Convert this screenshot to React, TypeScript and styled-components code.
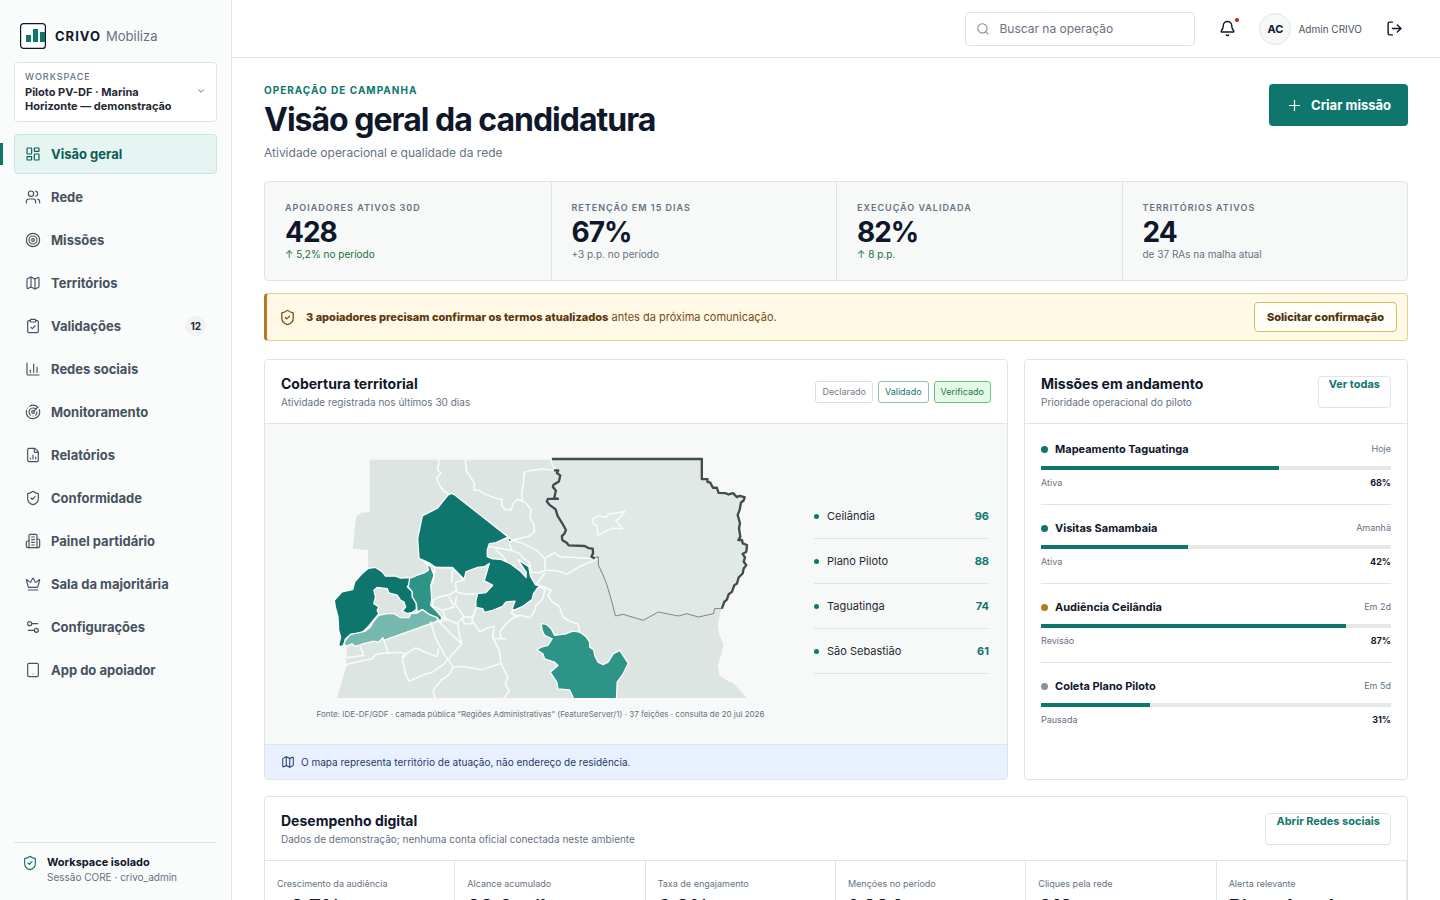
import React from 'react';
import styled, { createGlobalStyle } from 'styled-components';
import {
  Bell, ChartColumn, ChevronDown, ClipboardCheck, Crown, FileChartColumn, LayoutDashboard,
  LogOut, Map as MapIcon, Plus, Radar, Search, Settings2, ShieldCheck, Tablet, Target, Users,
} from 'lucide-react';

const c = {
  ink: '#0f172a',
  text: '#1f2933',
  slate: '#475260',
  muted: '#66727f',
  line: '#e1e4e6',
  soft: '#f7f8f8',
  teal: '#0f766e',
  amber: '#b7791f',
};

const GlobalStyle = createGlobalStyle`
  *, *::before, *::after { box-sizing: border-box; }
  body {
    margin: 0;
    background: #fff;
    color: ${c.ink};
    font-family: Inter, "Liberation Sans", sans-serif;
    font-size: 13px;
    line-height: 16px;
  }
  h1, h2, p, ul, dl, dd { margin: 0; padding: 0; }
  ul { list-style: none; }
  a { color: inherit; text-decoration: none; }
  button, input { font: inherit; color: inherit; }
  button { cursor: pointer; }
  svg { display: block; flex: none; }
`;

const Shell = styled.div`
  display: grid;
  grid-template-columns: 232px minmax(0, 1fr);
  align-items: start;
`;

const Sidebar = styled.aside`
  position: sticky;
  top: 0;
  height: 100vh;
  display: flex;
  flex-direction: column;
  padding: 23px 14px 16px;
  background: #fafbfb;
  border-right: 1px solid ${c.line};
`;

const Brand = styled.a`
  display: flex;
  align-items: center;
  gap: 9px;
  height: 25px;
  padding-left: 6px;
  margin-bottom: 14px;
  font-size: 13px;
  color: ${c.muted};
  strong {
    margin-right: 5px;
    color: ${c.ink};
    letter-spacing: 1px;
  }
`;

const Workspace = styled.button`
  display: flex;
  align-items: center;
  justify-content: space-between;
  gap: 8px;
  min-height: 60px;
  margin-bottom: 12px;
  padding: 6px 10px 8px;
  border: 1px solid ${c.line};
  border-radius: 4px;
  background: #fff;
  text-align: left;
  font-size: 11px;
  line-height: 14px;
  font-weight: 700;
  color: ${c.text};
  small {
    display: block;
    margin-bottom: 1px;
    font-size: 9px;
    font-weight: 500;
    letter-spacing: 1px;
    color: ${c.muted};
  }
`;

const Nav = styled.nav`
  ul { display: grid; gap: 3px; }
`;

const NavLink = styled.a<{ $active?: boolean }>`
  position: relative;
  display: flex;
  align-items: center;
  gap: 10px;
  height: 40px;
  padding: 0 10px;
  border: 1px solid ${p => (p.$active ? '#cde5e0' : 'transparent')};
  border-radius: 4px;
  background: ${p => (p.$active ? '#e6f5f1' : 'transparent')};
  color: ${p => (p.$active ? '#0b5e57' : c.slate)};
  font-weight: 700;
  &::before {
    content: '';
    display: ${p => (p.$active ? 'block' : 'none')};
    position: absolute;
    left: -15px;
    top: 8px;
    width: 3px;
    height: 22px;
    background: ${c.teal};
  }
`;

const Count = styled.span`
  margin-left: auto;
  padding: 0 5px;
  line-height: 20px;
  border-radius: 10px;
  background: #f0f2f3;
  color: ${c.text};
  font-size: 10px;
`;

const SideFoot = styled.div`
  display: flex;
  gap: 9px;
  margin-top: auto;
  padding: 12px 8px 0;
  border-top: 1px solid ${c.line};
  font-size: 10px;
  line-height: 14px;
  color: ${c.muted};
  svg { color: ${c.teal}; }
  strong { display: block; font-size: 11px; font-weight: 700; line-height: 15px; color: ${c.ink}; }
`;

const Topbar = styled.header`
  display: flex;
  align-items: center;
  justify-content: flex-end;
  gap: 14px;
  height: 58px;
  padding: 0 28px;
  border-bottom: 1px solid ${c.line};
`;

const SearchBox = styled.label`
  display: flex;
  align-items: center;
  gap: 9px;
  width: 230px;
  height: 34px;
  padding: 0 10px;
  border: 1px solid ${c.line};
  border-radius: 4px;
  color: #7b8691;
  input {
    width: 100%;
    padding: 0;
    border: 0;
    outline: 0;
    background: none;
    font-size: 12px;
  }
  input::placeholder { color: #6b7280; opacity: 1; }
`;

const IconButton = styled.button`
  position: relative;
  display: grid;
  place-items: center;
  width: 36px;
  height: 36px;
  padding: 0;
  border: 0;
  background: none;
`;

const Alarm = styled.span`
  position: absolute;
  top: 7px;
  right: 6px;
  width: 4px;
  height: 4px;
  border-radius: 50%;
  background: #b42318;
`;

const Profile = styled.div`
  display: flex;
  align-items: center;
  gap: 7px;
  font-size: 10px;
  color: ${c.slate};
`;

const Avatar = styled.span`
  display: grid;
  place-items: center;
  width: 32px;
  height: 32px;
  border: 1px solid ${c.line};
  border-radius: 50%;
  background: ${c.soft};
  color: ${c.ink};
  font-size: 11px;
  font-weight: 700;
`;

const Main = styled.main`
  padding: 26px 32px;
`;

const PageHead = styled.div`
  display: flex;
  justify-content: space-between;
  align-items: flex-start;
  margin-bottom: 20px;
`;

const Eyebrow = styled.p`
  font-size: 10px;
  line-height: 12px;
  font-weight: 700;
  letter-spacing: 1px;
  color: ${c.teal};
`;

const Title = styled.h1`
  font-size: 32px;
  line-height: 48px;
  font-weight: 700;
  letter-spacing: -1px;
`;

const Lead = styled.p`
  margin-top: 1px;
  font-size: 12px;
  color: ${c.muted};
`;

const PrimaryButton = styled.button`
  display: flex;
  align-items: center;
  gap: 8px;
  height: 42px;
  padding: 0 17px;
  border: 0;
  border-radius: 4px;
  background: ${c.teal};
  color: #fff;
  font-weight: 700;
`;

const Stats = styled.dl`
  display: grid;
  grid-template-columns: repeat(4, minmax(0, 1fr));
  border: 1px solid ${c.line};
  border-radius: 4px;
  background: ${c.soft};
`;

const Stat = styled.div`
  padding: 18px 20px 20px;
  & + & { border-left: 1px solid ${c.line}; }
  dt {
    font-size: 9px;
    line-height: 16px;
    font-weight: 600;
    letter-spacing: 1px;
    color: ${c.muted};
  }
`;

const StatValue = styled.dd`
  font-size: 28px;
  line-height: 32px;
  font-weight: 700;
  letter-spacing: -1px;
`;

const StatNote = styled.dd<{ $up?: boolean }>`
  font-size: 10px;
  line-height: 12px;
  color: ${p => (p.$up ? '#15703a' : c.muted)};
`;

const Notice = styled.section`
  display: flex;
  align-items: center;
  gap: 10px;
  min-height: 48px;
  margin: 12px 0 18px;
  padding: 0 10px 0 12px;
  border: 1px solid #e6cf94;
  border-left: 3px solid ${c.amber};
  border-radius: 4px;
  background: #fff9e6;
  color: #7a4a12;
  font-size: 11px;
  strong { font-weight: 800; color: #5c360c; }
  p { flex: 1; }
`;

const NoticeButton = styled.button`
  height: 30px;
  padding: 0 12px;
  border: 1px solid #d9b96c;
  border-radius: 4px;
  background: #fffdf5;
  color: #4f300b;
  font-size: 11px;
  font-weight: 800;
`;

const Columns = styled.div`
  display: grid;
  grid-template-columns: minmax(0, 31fr) minmax(0, 16fr);
  gap: 16px;
  margin-bottom: 16px;
`;

const Card = styled.section`
  display: flex;
  flex-direction: column;
  border: 1px solid ${c.line};
  border-radius: 4px;
  background: #fff;
  overflow: hidden;
`;

const CardHead = styled.header`
  display: flex;
  align-items: center;
  justify-content: space-between;
  height: 64px;
  padding: 0 16px;
  border-bottom: 1px solid ${c.line};
  h2 { font-size: 14px; line-height: 20px; font-weight: 700; }
  p { font-size: 10px; color: ${c.muted}; }
`;

const HeadLink = styled.a`
  height: 32px;
  padding: 0 10px;
  border: 1px solid ${c.line};
  border-radius: 4px;
  font-size: 11px;
  line-height: 15px;
  font-weight: 700;
  color: ${c.teal};
`;

const Tags = styled.div`
  display: flex;
  gap: 5px;
`;

const Tag = styled.button<{ $tone: 'plain' | 'teal' | 'green' }>`
  height: 22px;
  padding: 0 6px;
  border: 1px solid ${p => ({ plain: '#dcdfe2', teal: '#8bbfb9', green: '#6fc389' })[p.$tone]};
  border-radius: 3px;
  background: ${p => (p.$tone === 'green' ? '#e3fbe6' : '#fff')};
  color: ${p => ({ plain: '#737d87', teal: c.teal, green: '#1b7a3d' })[p.$tone]};
  font-size: 9px;
  line-height: 12px;
`;

const MapBody = styled.div`
  flex: 1;
  display: grid;
  grid-template-columns: minmax(0, 1fr) 175px;
  gap: 16px;
  align-items: center;
  min-height: 320px;
  padding: 0 18px;
  background: ${c.soft};
`;

const Figure = styled.figure`
  margin: 10px 0 0;
  text-align: center;
  svg { width: 100%; height: 243px; }
  figcaption {
    margin-top: 6px;
    font-size: 8px;
    color: ${c.muted};
  }
`;

const Ranking = styled.ul`
  width: 100%;
`;

const RankRow = styled.li`
  display: flex;
  align-items: center;
  gap: 8px;
  height: 45px;
  border-bottom: 1px solid ${c.line};
  font-size: 11px;
  color: ${c.text};
  &::before {
    content: '';
    width: 5px;
    height: 5px;
    border-radius: 50%;
    background: ${c.teal};
  }
  strong { margin-left: auto; color: ${c.teal}; }
`;

const MapNote = styled.p`
  display: flex;
  align-items: center;
  gap: 6px;
  height: 35px;
  padding: 0 16px;
  border-top: 1px solid #dbe5f5;
  background: #eaf1fe;
  color: #1e3a6e;
  font-size: 10px;
`;

const MissionList = styled.ul`
  padding: 0 16px;
`;

const Mission = styled.li`
  display: grid;
  gap: 9px;
  height: 79px;
  padding-top: 15px;
  align-content: start;
  & + & { border-top: 1px solid ${c.line}; }
  &:first-child { height: 80px; padding-top: 17px; }
`;

const MissionRow = styled.div`
  display: flex;
  align-items: center;
  justify-content: space-between;
  line-height: 16px;
  font-size: 9px;
  color: ${c.muted};
  b { color: ${c.ink}; font-size: 9px; }
`;

const MissionName = styled.span<{ $dot: string }>`
  display: flex;
  align-items: center;
  gap: 7px;
  font-size: 11px;
  font-weight: 700;
  color: ${c.ink};
  &::before {
    content: '';
    width: 7px;
    height: 7px;
    border-radius: 50%;
    background: ${p => p.$dot};
  }
`;

const Track = styled.div`
  height: 4px;
  margin-bottom: -5px;
  background: #e6e8e8;
`;

const Fill = styled.div`
  height: 100%;
  background: ${c.teal};
`;

const Metrics = styled.dl`
  display: grid;
  grid-template-columns: repeat(6, minmax(0, 1fr));
`;

const Metric = styled.div`
  padding: 15px 12px;
  border-right: 1px solid ${c.line};
  dt { font-size: 9px; color: ${c.muted}; }
  dd { margin-top: 3px; font-size: 20px; line-height: 24px; font-weight: 700; }
`;

const Building = ({ size = 16, strokeWidth = 2 }: { size?: number; strokeWidth?: number }) => (
  <svg width={size} height={size} viewBox="0 0 24 24" fill="none" stroke="currentColor" strokeWidth={strokeWidth} strokeLinecap="round" strokeLinejoin="round" aria-hidden="true">
    <path d="M6 22V4a2 2 0 0 1 2-2h8a2 2 0 0 1 2 2v18Z" />
    <path d="M6 12H4a2 2 0 0 0-2 2v6a2 2 0 0 0 2 2h2" />
    <path d="M18 9h2a2 2 0 0 1 2 2v9a2 2 0 0 1-2 2h-2" />
    <path d="M10 6h4M10 10h4M10 14h4M10 18h4" />
  </svg>
);

const nav = [
  { label: 'Visão geral', icon: LayoutDashboard },
  { label: 'Rede', icon: Users },
  { label: 'Missões', icon: Target },
  { label: 'Territórios', icon: MapIcon },
  { label: 'Validações', icon: ClipboardCheck, count: 12 },
  { label: 'Redes sociais', icon: ChartColumn },
  { label: 'Monitoramento', icon: Radar },
  { label: 'Relatórios', icon: FileChartColumn },
  { label: 'Conformidade', icon: ShieldCheck },
  { label: 'Painel partidário', icon: Building },
  { label: 'Sala da majoritária', icon: Crown },
  { label: 'Configurações', icon: Settings2 },
  { label: 'App do apoiador', icon: Tablet },
];

const stats = [
  { label: 'APOIADORES ATIVOS 30D', value: '428', note: '↑ 5,2% no período', up: true },
  { label: 'RETENÇÃO EM 15 DIAS', value: '67%', note: '+3 p.p. no período' },
  { label: 'EXECUÇÃO VALIDADA', value: '82%', note: '↑ 8 p.p.', up: true },
  { label: 'TERRITÓRIOS ATIVOS', value: '24', note: 'de 37 RAs na malha atual' },
];

const ranking: [string, number][] = [['Ceilândia', 96], ['Plano Piloto', 88], ['Taguatinga', 74], ['São Sebastião', 61]];

const missions = [
  { name: 'Mapeamento Taguatinga', due: 'Hoje', state: 'Ativa', done: 68, dot: c.teal },
  { name: 'Visitas Samambaia', due: 'Amanhã', state: 'Ativa', done: 42, dot: c.teal },
  { name: 'Audiência Ceilândia', due: 'Em 2d', state: 'Revisão', done: 87, dot: c.amber },
  { name: 'Coleta Plano Piloto', due: 'Em 5d', state: 'Pausada', done: 31, dot: '#8b929a' },
];

const metrics = [
  ['Crescimento da audiência', '+8,7%'],
  ['Alcance acumulado', '38,6 mil'],
  ['Taxa de engajamento', '6,8%'],
  ['Menções no período', '1.284'],
  ['Cliques pela rede', '612'],
  ['Alerta relevante', 'Risco local'],
];

const Logo = () => (
  <svg width="26" height="26" viewBox="0 0 26 26" aria-hidden="true">
    <rect x=".6" y=".6" width="24.8" height="24.8" rx="3" fill="#fff" stroke={c.ink} strokeWidth="1.2" />
    <path d="M6 12h5v7H6zM13 6h5v13h-5zM20 9h5v10h-5z" fill={c.teal} />
  </svg>
);

const DistrictMap = () => (
  <svg viewBox="14 22 1238 726" role="img" aria-label="Mapa das regiões administrativas do Distrito Federal">
    <path fill="#dde5e3" d="M123 30H1115V88L1132 88 1165 125 1243 142 1222 195 1230 268 1250 285 1240 320 1248 345 1210 415 1172 478 1163 520 1166 550 1180 582 1174 605 1163 645 1168 675 1190 690 1210 698 1250 742H25L40 690 52 650 55 590 40 540 30 480 72 418 118 356V300L72 296 82 200 100 188H123Z" />
    <g stroke="#fafcfb" strokeWidth="4" strokeLinejoin="round">
      <path fill="#0f766e" d="M358 134 366 130 378 136 548 270 540 278 534 262 500 278 480 281 474 300V320L490 326 515 328 545 342 575 365 590 382 590 366 565 328 598 350 603 378 618 404 648 411 625 412 612 430 608 448 580 468 552 480 548 476 557 453 530 455 520 468 490 480 465 486 460 475 440 471 440 452 445 430 470 427 490 405 465 392 480 340 465 350 445 352 410 365 405 388 385 370 370 354 320 352 300 338 270 325 266 265 280 198 325 175 345 150Z" />
      <path fill="#0f766e" d="M17 450 40 425 72 418 78 395 100 370 118 355 140 352 160 365 170 378 200 378 215 384 240 382 245 395 235 410 250 425V440L262 455V478L250 486 235 490 220 482 230 470 225 455 215 450 205 435 180 428 175 415 145 412 135 420 140 440 135 460 150 470 145 480 150 490 132 512 120 527 100 547 80 550 65 553 50 566 46 582 36 590 30 583 36 560 30 540 28 500 20 470Z" />
      <path fill="#2f9488" d="M288 338 305 350 315 375 305 405 308 445 305 465 325 485 338 500 335 514 325 504 300 492 280 478 265 485 262 460 250 440V425L238 410 242 385 265 375 285 368 298 360 295 345Z" />
      <path fill="#76b7ae" d="M50 570 65 552 85 548 110 542 125 530 135 512 150 495 175 490 195 490 215 502 240 502 245 490 265 488 280 478 300 492 325 502 325 512 165 570 162 562 150 575 135 572 110 578 80 588 70 580 52 588 46 580Z" />
      <path fill="#2f9488" d="M635 520 650 522 665 535 675 555 710 550 730 542 750 545 770 560 780 575V590L792 598 795 615 805 635 820 642 835 635 850 610 870 600 895 638 880 670 862 695 860 744H732L720 718 685 715 682 695 662 665 685 645 675 635 645 625 640 610 622 598 635 590 655 585 668 565 645 555 638 540Z" />
    </g>
    <g fill="none" stroke="#fafcfb" strokeWidth="4.500" strokeLinejoin="round" strokeLinecap="round">
      <path d="M330 30 326 62 336 70 322 85 330 105 345 125 362 134M408 30 412 65 435 98 434 120 450 122 465 132 490 142 518 150 516 165 526 178 545 180 552 160 566 148 580 155 577 130 582 100 584 68 605 62 640 58 682 62" />
      <path d="M566 148 590 160 605 180 602 205 614 225 615 245 600 258 575 265 548 270M548 270 580 280 625 303 645 325 648 360M645 325 675 308 690 320 790 325M648 360 630 368 605 366M648 360 682 362 712 372 748 350 800 328" />
      <path d="M540 282 548 302 570 310 582 325 600 338 605 366M500 300 520 318 530 332M480 290 520 296 548 302M620 403 645 370M625 405 646 420 640 445 620 465 612 490 600 502 575 495 558 498 530 520 512 545 515 562M645 412 665 420 655 435 668 455 690 470 700 500 725 515 745 520 750 545M565 500 545 488 552 478M495 564 530 565" />
      <path d="M288 338 318 352 312 398M318 352H370L405 388 378 398 382 420 365 432 330 440 312 450 310 468M370 362 368 396M382 425 408 432 440 430M382 440 378 460 390 478 405 500M310 468 340 480 375 470 360 440M340 480 350 508 330 514M338 500 385 520 402 500 430 500 428 520 405 520 400 502M430 500 440 475M440 471 432 500M432 515 452 545 475 532 495 528 490 560 510 600 515 640 535 680 528 700 540 722 522 744" />
      <path d="M305 515 318 560 345 610 372 650 360 672 335 690 312 720 318 744M330 514 370 555 398 580 345 640 310 665 285 672 240 692 230 670 220 625 232 612 215 605 165 608 140 612 130 625 60 640 50 645M220 618 260 592 300 610 325 618 328 595M372 650 405 648 455 658 510 640M385 520 392 560 398 580M165 570 178 605M95 590 105 615 55 622" />
      <path d="M665 30 668 45 680 62M190 570" />
    </g>
    <path fill="#e1e9e7" d="M665 28H1115V88H1132L1145 105 1165 125 1205 130 1243 142 1222 195 1230 268 1250 285 1240 320 1248 345 1210 415 1175 475 1155 475 1150 490 1105 500 1070 490 1045 497 985 485 940 510 880 492 857 495 830 400 805 320 790 325V300L740 288 697 265 708 240 680 180 652 150 678 120 692 70 678 50Z" />
    <path fill="none" stroke="#fafcfb" strokeWidth="4.500" strokeLinejoin="round" d="M790 206 805 198 830 202 833 194 885 185 866 207 858 212 878 236 845 235 805 256 800 225 790 222Z" />
    <path fill="none" stroke="#4d5659" strokeWidth="2" d="M1175 475H1153L1150 490 1105 500 1070 490 1045 497 985 485 940 510 880 492 857 497 845 450 830 400 820 375 806 345V320L790 325" />
    <path fill="none" stroke="#424b50" strokeWidth="7" strokeLinejoin="round" d="M1175 475 1182 455 1190 448 1195 432 1205 425 1212 405 1220 400 1225 382 1237 370 1240 355 1248 345 1240 335 1244 322 1237 312 1248 305 1250 285 1237 280 1235 270 1224 270 1230 260 1226 235 1229 220 1222 195 1228 180 1232 158 1240 152 1243 142 1228 138 1220 142 1208 130 1195 134 1185 130 1165 129 1160 114 1148 114 1140 98 1132 97 1132 88H1115V28H667M673 62H686L682 70 692 77 688 95 672 105 670 112 679 122 674 144 685 147H655L652 155 660 165 678 178 684 198 698 220 709 240 704 252 697 258 698 270 712 279 717 286 765 288 776 294 789 296 790 310 785 320 795 325" />
  </svg>
);

const App = () => (
  <>
    <GlobalStyle />
    <Shell>
      <Sidebar>
        <Brand href="#">
          <Logo />
          <span><strong>CRIVO</strong>Mobiliza</span>
        </Brand>
        <Workspace type="button">
          <span><small>WORKSPACE</small>Piloto PV-DF · Marina Horizonte — demonstração</span>
          <ChevronDown size={10} color={c.slate} />
        </Workspace>
        <Nav aria-label="Principal">
          <ul>
            {nav.map(({ label, icon: Icon, count }, i) => (
              <li key={label}>
                <NavLink href="#" $active={i === 0} aria-current={i === 0 ? 'page' : undefined}>
                  <Icon size={16} strokeWidth={1.75} />
                  {label}
                  {count && <Count>{count}</Count>}
                </NavLink>
              </li>
            ))}
          </ul>
        </Nav>
        <SideFoot>
          <ShieldCheck size={16} strokeWidth={1.75} />
          <div><strong>Workspace isolado</strong>Sessão CORE · crivo_admin</div>
        </SideFoot>
      </Sidebar>
      <div>
        <Topbar>
          <SearchBox>
            <Search size={14} strokeWidth={1.75} />
            <input type="search" placeholder="Buscar na operação" aria-label="Buscar na operação" />
          </SearchBox>
          <IconButton type="button" aria-label="Notificações">
            <Bell size={17} strokeWidth={2} />
            <Alarm />
          </IconButton>
          <Profile><Avatar>AC</Avatar>Admin CRIVO</Profile>
          <IconButton type="button" aria-label="Sair"><LogOut size={17} strokeWidth={2} /></IconButton>
        </Topbar>
        <Main>
          <PageHead>
            <div>
              <Eyebrow>OPERAÇÃO DE CAMPANHA</Eyebrow>
              <Title>Visão geral da candidatura</Title>
              <Lead>Atividade operacional e qualidade da rede</Lead>
            </div>
            <PrimaryButton type="button"><Plus size={17} strokeWidth={1.75} />Criar missão</PrimaryButton>
          </PageHead>
          <Stats>
            {stats.map(s => (
              <Stat key={s.label}>
                <dt>{s.label}</dt>
                <StatValue>{s.value}</StatValue>
                <StatNote $up={s.up}>{s.note}</StatNote>
              </Stat>
            ))}
          </Stats>
          <Notice>
            <ShieldCheck size={17} strokeWidth={1.75} />
            <p><strong>3 apoiadores precisam confirmar os termos atualizados</strong> antes da próxima comunicação.</p>
            <NoticeButton type="button">Solicitar confirmação</NoticeButton>
          </Notice>
          <Columns>
            <Card>
              <CardHead>
                <div>
                  <h2>Cobertura territorial</h2>
                  <p>Atividade registrada nos últimos 30 dias</p>
                </div>
                <Tags>
                  <Tag type="button" $tone="plain">Declarado</Tag>
                  <Tag type="button" $tone="teal">Validado</Tag>
                  <Tag type="button" $tone="green">Verificado</Tag>
                </Tags>
              </CardHead>
              <MapBody>
                <Figure>
                  <DistrictMap />
                  <figcaption>Fonte: IDE-DF/GDF · camada pública “Regiões Administrativas” (FeatureServer/1) · 37 feições · consulta de 20 jul 2026</figcaption>
                </Figure>
                <Ranking>
                  {ranking.map(([name, score]) => (
                    <RankRow key={name}>{name}<strong>{score}</strong></RankRow>
                  ))}
                </Ranking>
              </MapBody>
              <MapNote><MapIcon size={14} strokeWidth={1.75} />O mapa representa território de atuação, não endereço de residência.</MapNote>
            </Card>
            <Card>
              <CardHead>
                <div>
                  <h2>Missões em andamento</h2>
                  <p>Prioridade operacional do piloto</p>
                </div>
                <HeadLink href="#">Ver todas</HeadLink>
              </CardHead>
              <MissionList>
                {missions.map(m => (
                  <Mission key={m.name}>
                    <MissionRow><MissionName $dot={m.dot}>{m.name}</MissionName>{m.due}</MissionRow>
                    <Track><Fill style={{ width: `${m.done}%` }} /></Track>
                    <MissionRow>{m.state}<b>{m.done}%</b></MissionRow>
                  </Mission>
                ))}
              </MissionList>
            </Card>
          </Columns>
          <Card>
            <CardHead>
              <div>
                <h2>Desempenho digital</h2>
                <p>Dados de demonstração; nenhuma conta oficial conectada neste ambiente</p>
              </div>
              <HeadLink href="#">Abrir Redes sociais</HeadLink>
            </CardHead>
            <Metrics>
              {metrics.map(([label, value]) => (
                <Metric key={label}><dt>{label}</dt><dd>{value}</dd></Metric>
              ))}
            </Metrics>
          </Card>
        </Main>
      </div>
    </Shell>
  </>
);

export default App;
